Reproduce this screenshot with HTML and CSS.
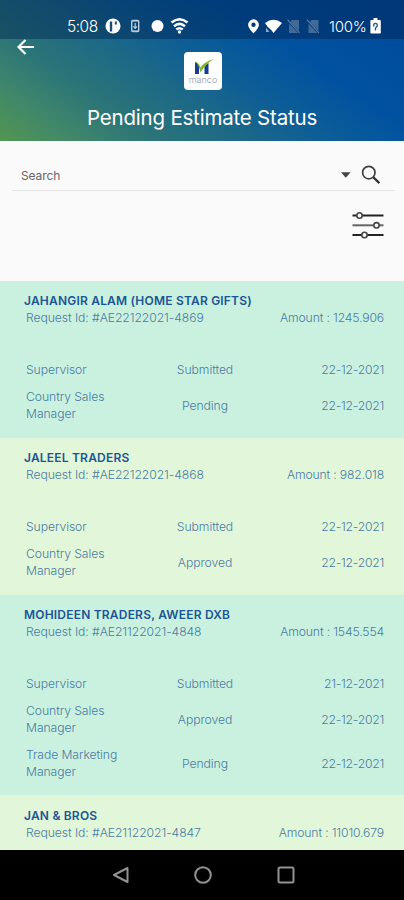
FILE: index.html
```html
<!DOCTYPE html>
<html lang="en">
<head>
<meta charset="utf-8">
<title>Pending Estimate Status</title>
<link rel="stylesheet" href="styles.css">
</head>
<body>
<header class="header">
  <div class="status">
    <span class="clock">5:08</span>
    <svg class="status-left" width="86" height="18" viewBox="0 0 86 18">
      <circle cx="8" cy="9" r="7.500" fill="#fff"/>
      <path d="M6 4.500v10" stroke="#174c78" stroke-width="2.400"/>
      <path d="M9.800 4.500h2v3h-2z" fill="#174c78"/>
      <rect x="26.700" y="3.500" width="7" height="11" rx="1" fill="none" stroke="#b9cbdc" stroke-width="1.400"/>
      <path d="M27 4h6.500M27 14h6.500M30.200 6v5M28.300 9.300l1.900 2 1.900-2" fill="none" stroke="#b9cbdc" stroke-width="1.200"/>
      <circle cx="52.500" cy="9" r="6" fill="#fff"/>
      <path d="M66.500 5.500q8-6.500 16 0M69 9.300q5.500-4.800 11 0M71.300 12.500q3.200-2.500 6.400 0" fill="none" stroke="#fff" stroke-width="2.500"/>
      <circle cx="74.500" cy="15" r="1.700" fill="#fff"/>
    </svg>
    <svg class="status-right" width="76" height="18" viewBox="0 0 76 18">
      <path fill-rule="evenodd" d="M6.500 2.300a5.400 5.400 0 0 0-5.400 5.400c0 3.600 5.400 8.600 5.400 8.600s5.400-5 5.400-8.600a5.400 5.400 0 0 0-5.400-5.400zm0 3.300a2.200 2.200 0 1 1 0 4.400 2.200 2.200 0 0 1 0-4.400z" fill="#fff"/>
      <path d="M18 6q8.500-6.500 17 0l-8.500 10-2.300-3-3.600-3.200z" fill="#fff"/>
      <path d="M19 10.500v4.500h3.500z" fill="#8aa8c8"/>
      <path d="M45 3h7v13H42V7z" fill="#416a97"/>
      <path d="M40 3l13 13.500" stroke="#053f7c" stroke-width="2.200"/>
      <path d="M40.500 2.700l12 13.300" stroke="#5c80a8" stroke-width="1.100"/>
      <path d="M64.500 3h7v13h-10V7z" fill="#416a97"/>
      <path d="M59.500 3l13 13.500" stroke="#053f7c" stroke-width="2.200"/>
      <path d="M60 2.700l12 13.300" stroke="#5c80a8" stroke-width="1.100"/>
    </svg>
    <span class="percent">100%</span>
    <svg class="battery" width="11" height="16" viewBox="0 0 11 16">
      <path d="M3.500 0h4v2H10a.8.800 0 0 1 .8.800v12a.8.800 0 0 1-.8.800H1.200a.8.800 0 0 1-.8-.8v-12A.8.800 0 0 1 1.200 2h2.300z" fill="#fff"/>
      <path d="M3.800 8.500V6.300q1.800-1.800 3.400 0v2L5.500 10v2.500" fill="none" stroke="#24558b" stroke-width="1.300"/>
    </svg>
  </div>
  <div class="appbar">
    <svg class="back" width="18" height="16" viewBox="0 0 18 16"><path d="M8.500 1L1.500 8l7 7M1.500 8H17" fill="none" stroke="#fff" stroke-width="2.200"/></svg>
    <div class="logo">
      <svg width="26" height="17" viewBox="0 0 26 17">
        <path d="M5 4l4 2.500V16H5zM14.500 7.500L18.500 5v11h-4z" fill="#173b94"/>
        <path d="M5 3.500q4 1 5.500 6Q14 3.500 24 1q-7 3.500-13.500 13.500Q9 7 5 3.500z" fill="#83b82a"/>
      </svg>
      <span class="logo-name">manco</span>
    </div>
  </div>
  <h1 class="title">Pending Estimate Status</h1>
</header>

<section class="tools">
  <div class="search">
    <span class="search-label">Search</span>
    <svg class="caret" width="10" height="6" viewBox="0 0 10 6"><path d="M0 .3h9.600L4.800 5.700z" fill="#444"/></svg>
    <svg class="lens" width="20" height="20" viewBox="0 0 20 20"><circle cx="7.800" cy="7.600" r="6.200" fill="none" stroke="#3d3d3d" stroke-width="1.700"/><path d="M12.200 12.100l6.200 6" stroke="#333" stroke-width="2.200"/></svg>
  </div>
  <svg class="filter" width="32" height="28" viewBox="0 0 32 28">
    <path d="M.5 4.500h31M.5 24h31" stroke="#222" stroke-width="2"/>
    <path d="M.5 14.300h31" stroke="#666" stroke-width="2"/>
    <g fill="#fafafa" stroke="#444" stroke-width="1.600"><circle cx="7.500" cy="4.500" r="2.700"/><circle cx="24.500" cy="14.300" r="2.700"/><circle cx="12.500" cy="24" r="2.700"/></g>
  </svg>
</section>

<main class="list">
  <article class="card mint">
    <h2 class="name">JAHANGIR ALAM (HOME STAR GIFTS)</h2>
    <div class="meta"><span class="request">Request Id: #AE22122021-4869</span><span class="amount">Amount : 1245.906</span></div>
    <div class="steps">
      <div class="step"><span class="role">Supervisor</span><span class="state">Submitted</span><span class="date">22-12-2021</span></div>
      <div class="step"><span class="role">Country Sales<br>Manager</span><span class="state">Pending</span><span class="date">22-12-2021</span></div>
    </div>
  </article>
  <article class="card lime">
    <h2 class="name">JALEEL TRADERS</h2>
    <div class="meta"><span class="request">Request Id: #AE22122021-4868</span><span class="amount">Amount : 982.018</span></div>
    <div class="steps">
      <div class="step"><span class="role">Supervisor</span><span class="state">Submitted</span><span class="date">22-12-2021</span></div>
      <div class="step"><span class="role">Country Sales<br>Manager</span><span class="state">Approved</span><span class="date">22-12-2021</span></div>
    </div>
  </article>
  <article class="card mint">
    <h2 class="name">MOHIDEEN TRADERS, AWEER DXB</h2>
    <div class="meta"><span class="request">Request Id: #AE21122021-4848</span><span class="amount">Amount : 1545.554</span></div>
    <div class="steps">
      <div class="step"><span class="role">Supervisor</span><span class="state">Submitted</span><span class="date">21-12-2021</span></div>
      <div class="step"><span class="role">Country Sales<br>Manager</span><span class="state">Approved</span><span class="date">22-12-2021</span></div>
      <div class="step"><span class="role">Trade Marketing<br>Manager</span><span class="state">Pending</span><span class="date">22-12-2021</span></div>
    </div>
  </article>
  <article class="card lime">
    <h2 class="name">JAN &amp; BROS</h2>
    <div class="meta"><span class="request">Request Id: #AE21122021-4847</span><span class="amount">Amount : 11010.679</span></div>
  </article>
</main>

<nav class="nav">
  <svg width="18" height="20" viewBox="0 0 18 20"><path d="M15.500 3v14L2 10z" fill="none" stroke="#929292" stroke-width="2" stroke-linejoin="round"/></svg>
  <svg width="20" height="20" viewBox="0 0 20 20"><circle cx="10" cy="10" r="7.800" fill="none" stroke="#929292" stroke-width="2"/></svg>
  <svg width="20" height="20" viewBox="0 0 20 20"><rect x="2.500" y="2.500" width="15" height="15" rx="1.500" fill="none" stroke="#929292" stroke-width="2"/></svg>
</nav>
</body>
</html>
```
FILE: styles.css
```css
* { box-sizing: border-box; }
body {
  margin: 0;
  width: 404px;
  height: 900px;
  overflow: hidden;
  display: flex;
  flex-direction: column;
  background: #fafafa;
  font-family: Inter, "Liberation Sans", sans-serif;
}
svg { display: block; flex: none; }
h1, h2 { margin: 0; }
.header {
  height: 141px;
  flex: none;
  color: #fff;
  background: linear-gradient(35deg, #529650 0%, #40876a 13%, #2b7478 26%, #1f6b84 38%, #0f5f95 52%, #0052a0 70%, #00499b 100%);
}
.status {
  height: 39px;
  padding: 13px 0 0 67px;
  display: flex;
  align-items: center;
  background: rgba(0, 32, 75, .42);
}
.clock { width: 38px; font-size: 15.500px; font-weight: 300; letter-spacing: -.5px; }
.status-right { margin-left: 56px; }
.percent { width: 40px; margin-left: 6px; font-size: 15px; font-weight: 300; letter-spacing: -.2px; }
.battery { margin-left: 1px; }
.appbar { height: 52px; display: flex; align-items: flex-start; padding-left: 17px; }
.logo {
  width: 38px;
  height: 38px;
  margin: 13px 0 0 149px;
  border-radius: 4px;
  background: #fff;
  display: flex;
  flex-direction: column;
  align-items: center;
  padding-top: 6px;
}
.logo-name { font-size: 9px; line-height: 9px; font-weight: 300; color: #8d98a8; }
.title {
  margin-top: 13px;
  text-align: center;
  font-size: 20.500px;
  line-height: 28px;
  font-weight: 400;
  letter-spacing: -.2px;
}
.tools { height: 140px; flex: none; padding: 19px 9px 0 12px; display: flex; flex-direction: column; }
.search {
  height: 31px;
  display: flex;
  align-items: center;
  padding: 0 14px 0 9px;
  border-bottom: 1px solid #e7e7e7;
}
.search-label { flex: 1; font-size: 12px; color: #666; letter-spacing: -.1px; }
.lens { margin-left: 10px; }
.filter { align-self: flex-end; margin: 20px 11px 0 0; }
.list { height: 569px; flex: none; overflow: hidden; }
.card { height: 157px; padding: 11px 20px 0 24px; }
.card:nth-child(3) { height: 200px; }
.mint { background: #caf1df; }
.lime { background: #e2f7d9; }
.name { font-size: 12px; line-height: 17px; font-weight: 600; letter-spacing: .2px; color: #1c5594; white-space: nowrap; }
.meta { display: flex; justify-content: space-between; padding-left: 2px; }
.meta, .step { font-size: 12.200px; line-height: 17px; font-weight: 300; color: #4b7ba4; letter-spacing: -.08px; }
.steps { display: flex; flex-direction: column; gap: 10px; margin-top: 35px; padding-left: 2px; }
.step { display: grid; grid-template-columns: 120px 118px 1fr; align-items: center; }
.state { text-align: center; }
.amount { letter-spacing: -.15px; }
.date { text-align: right; letter-spacing: -.25px; }
.card:last-child { padding-top: 12px; }
.nav {
  height: 50px;
  flex: none;
  background: #000;
  display: flex;
  align-items: center;
  padding-left: 112px;
  gap: 63px;
}
```
